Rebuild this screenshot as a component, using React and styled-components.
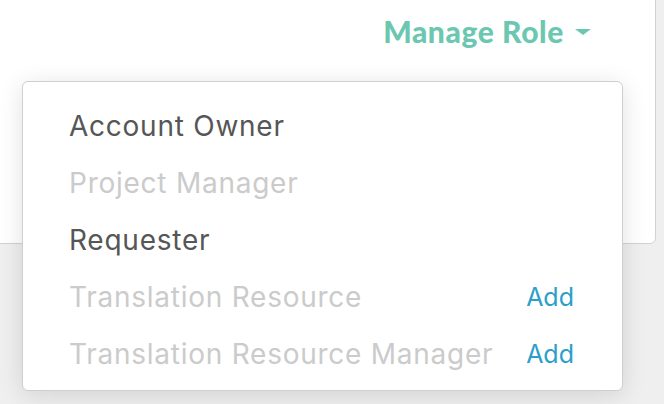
import React from "react";
import styled, { createGlobalStyle } from "styled-components";

const GlobalStyle = createGlobalStyle`
  html, body {
    margin: 0;
    padding: 0;
    background: #efefef;
    font-family: "Inter", "Liberation Sans", sans-serif;
  }
  #root {
    width: 664px;
    height: 404px;
    overflow: hidden;
  }
`;

const Stage = styled.div`
  position: relative;
  display: flow-root;
  width: 664px;
  height: 404px;
`;

const Card = styled.div`
  margin: -10px 0 0 -10px;
  width: 666px;
  height: 254px;
  box-sizing: border-box;
  background: #fff;
  border: 1px solid #d2d2d2;
  border-radius: 6px;
  display: flex;
  justify-content: flex-end;
  padding: 14px 64px 0 0;
`;

const RoleToggle = styled.button`
  display: flex;
  align-items: center;
  gap: 11px;
  height: 52px;
  border: 0;
  background: none;
  padding: 0;
  font-family: "Lato", "Liberation Sans", sans-serif;
  font-weight: 900;
  font-size: 30px;
  letter-spacing: 0.6px;
  color: #6cc7b1;
  cursor: pointer;
`;

const Caret = styled.span`
  width: 0;
  height: 0;
  border-left: 8px solid transparent;
  border-right: 8px solid transparent;
  border-top: 6px solid #6cc7b1;
  margin-top: 2px;
`;

const Menu = styled.ul`
  position: absolute;
  left: 22px;
  top: 81px;
  width: 601px;
  height: 310px;
  box-sizing: border-box;
  margin: 0;
  padding: 15px 48px 0 46px;
  list-style: none;
  background: #fff;
  border: 1px solid #cfcfcf;
  border-radius: 6px;
  box-shadow: 0 4px 24px rgba(0, 0, 0, 0.12);
`;

const Item = styled.li`
  display: flex;
  align-items: center;
  justify-content: space-between;
  height: 57px;
  font-size: 28px;
  letter-spacing: 0.75px;
  color: ${(p) => (p.$disabled ? "#cbcbcb" : "#565656")};
`;

const AddLink = styled.a`
  color: #2aa0c9;
  font-size: 25px;
  letter-spacing: 0;
  text-decoration: none;
  cursor: pointer;
`;

const roles = [
  { name: "Account Owner" },
  { name: "Project Manager", disabled: true },
  { name: "Requester" },
  { name: "Translation Resource", disabled: true, add: true },
  { name: "Translation Resource Manager", disabled: true, add: true },
];

export default function App() {
  return (
    <Stage>
      <GlobalStyle />
      <Card>
        <RoleToggle>
          Manage Role
          <Caret />
        </RoleToggle>
      </Card>
      <Menu>
        {roles.map((r) => (
          <Item key={r.name} $disabled={r.disabled}>
            <span>{r.name}</span>
            {r.add && <AddLink>Add</AddLink>}
          </Item>
        ))}
      </Menu>
    </Stage>
  );
}
